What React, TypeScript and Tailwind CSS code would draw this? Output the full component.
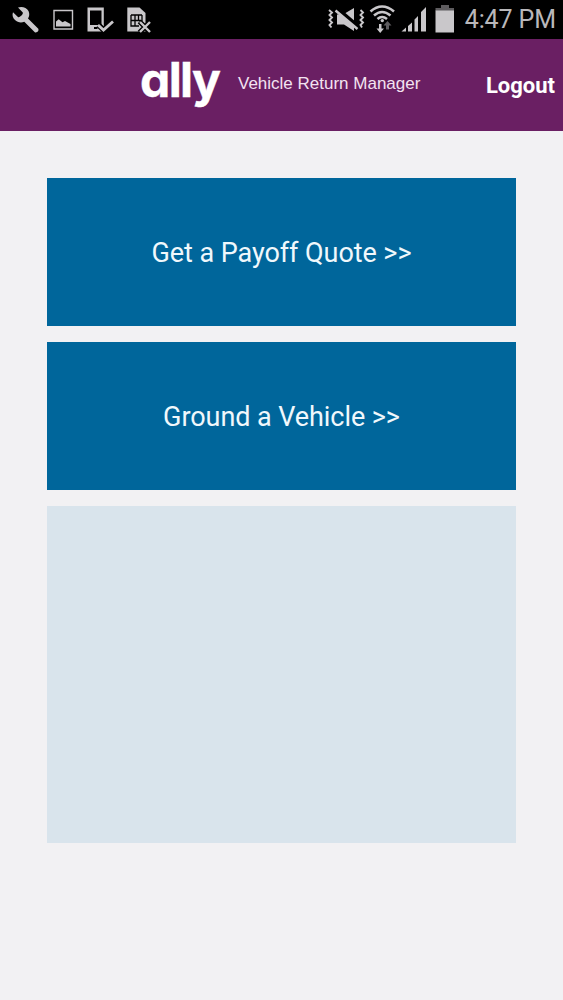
const ACTIONS = ['Get a Payoff Quote >>', 'Ground a Vehicle >>'];

function NotificationIcons() {
  return (
    <svg width="160" height="39" viewBox="0 0 160 39" fill="#c9c7ca">
      {/* wrench */}
      <path d="M18 7.500C22 6 26.500 7.500 28.500 11C29.700 13.500 29.500 16.500 28 18.500L38.300 28.800C39.200 30.800 37 33.200 34.800 32.200L24.300 21.800C21 23.200 17.500 22.500 15 20C12.600 17.600 12 14.800 13 12.200L18.200 17.200C19.500 17.800 23.600 14.200 22.800 12.600Z" />
      {/* picture */}
      <path d="M54 10.500H72.500V29H54Z" fill="none" stroke="#c9c7ca" strokeWidth="1.400" />
      <path d="M56 26.500V21.500L58.700 19.300L62.500 22.200L65 21L70.500 24V26.500Z" />
      {/* phone with a tick */}
      <path fillRule="evenodd" d="M87.500 7.500H103.800V31.500H87.500ZM90 10.500V25H101.500V10.500ZM94 27V29H97.500V27Z" />
      <path d="M98.500 25L103.500 30L114 20.500" fill="none" stroke="#000" strokeWidth="5.500" />
      <path d="M98 25L103.500 30L113 21.500" fill="none" stroke="#c9c7ca" strokeWidth="2.800" />
      {/* sim card */}
      <path d="M127.300 7.500H139.500L145.500 13V31.500H127.300Z" />
      <path d="M131 15H142M131 15V26H139M131 20.500H141M135 15V26M138.500 15V21M142 15V21" fill="none" stroke="#000" strokeWidth="1.300" />
      <path d="M139.500 21.500L150.500 32.500M150.500 21.500L139.500 32.500" stroke="#000" strokeWidth="5" />
      <path d="M140 22L150 32M150 22L140 32" stroke="#c9c7ca" strokeWidth="2.400" />
    </svg>
  );
}

function SystemIcons() {
  return (
    <svg width="135" height="39" viewBox="324 0 135 39" fill="#c9c7ca">
      {/* muted speaker */}
      <path d="M337 14.500H343L354 8V31L344 24.500H337Z" />
      <path d="M336.500 8.500L359 27.500" stroke="#000" strokeWidth="4.500" />
      <path d="M335.500 10.500L357.500 29" stroke="#c9c7ca" strokeWidth="2.400" />
      <path d="M329 10L332 12.500L329.500 15L332 17.500L329.500 20L332 22.500L329.500 25L331.500 27.500M360.500 10L363 12.500L360.500 15L363 17.500L360.500 20L363 22.500L360.500 25L362 27.500" fill="none" stroke="#c9c7ca" strokeWidth="1.900" />
      {/* wifi with traffic arrows */}
      <path d="M370.500 11.500Q382 1.500 394 11.500M374 15.500Q382 8.500 390.500 15.500M377.500 19Q382 15 387 19" fill="none" stroke="#c9c7ca" strokeWidth="2.600" />
      <circle cx="382.300" cy="20.600" r="1.700" />
      <path d="M379 24H381.500V28.500H384L380.200 33L376.500 28.500H379Z" />
      <path d="M386 29.500V25.500H383.500L387.500 21L391.500 25.500H389V29.500Z" fill="#5e5c5f" />
      {/* signal */}
      <path d="M401.500 31.500L406 27.500V31.500ZM408 26L412 22.500V31.500H408ZM414.500 19.500L418 16V31.500H414.500ZM421 12L426 7V31.500H421Z" />
      {/* battery */}
      <path d="M441 5H449V8H454V11H435.500V8H441Z" fill="#5e5c5f" />
      <path d="M435.500 10.500H454V32.500H435.500Z" />
    </svg>
  );
}

export default function App() {
  return (
    <div className="w-full min-h-[1000px] bg-[#f2f1f3] font-['Roboto',sans-serif]">
      {/* Status bar */}
      <div className="h-[39px] bg-black flex items-center justify-between pr-[7px] overflow-hidden">
        <NotificationIcons />
        <div className="flex items-center">
          <SystemIcons />
          <span className="ml-[6px] text-[25px] leading-[40px] text-[#b9b7ba] whitespace-nowrap tracking-[-0.1px]">4:47 PM</span>
        </div>
      </div>

      {/* Header */}
      <header className="h-[92px] bg-[#6a1f63] flex items-start pl-[140px] pr-[8px] text-white whitespace-nowrap">
        <span className="w-[98px] pt-[15px] font-['Inter',sans-serif] font-bold text-[48px] leading-[52px] tracking-[-1.6px] [-webkit-text-stroke:0.4px_white] [font-feature-settings:'cv11']">ally</span>
        <span className="pt-[35px] font-['Liberation_Sans',sans-serif] text-[17px] leading-[20px] text-[#f3e3f1]">Vehicle Return Manager</span>
        <button className="ml-auto pt-[34px] font-bold text-[22px] leading-[26px]">Logout</button>
      </header>

      <main className="pt-[47px] px-[47px] flex flex-col gap-4">
        {ACTIONS.map(label => (
          <button key={label} className="h-[148px] bg-[#00669b] text-[#f0f8fc] text-[27px] tracking-[-0.07px] pt-[2px]">
            {label}
          </button>
        ))}
        <div className="h-[337px] bg-[#d9e4ec]" />
      </main>
    </div>
  );
}
